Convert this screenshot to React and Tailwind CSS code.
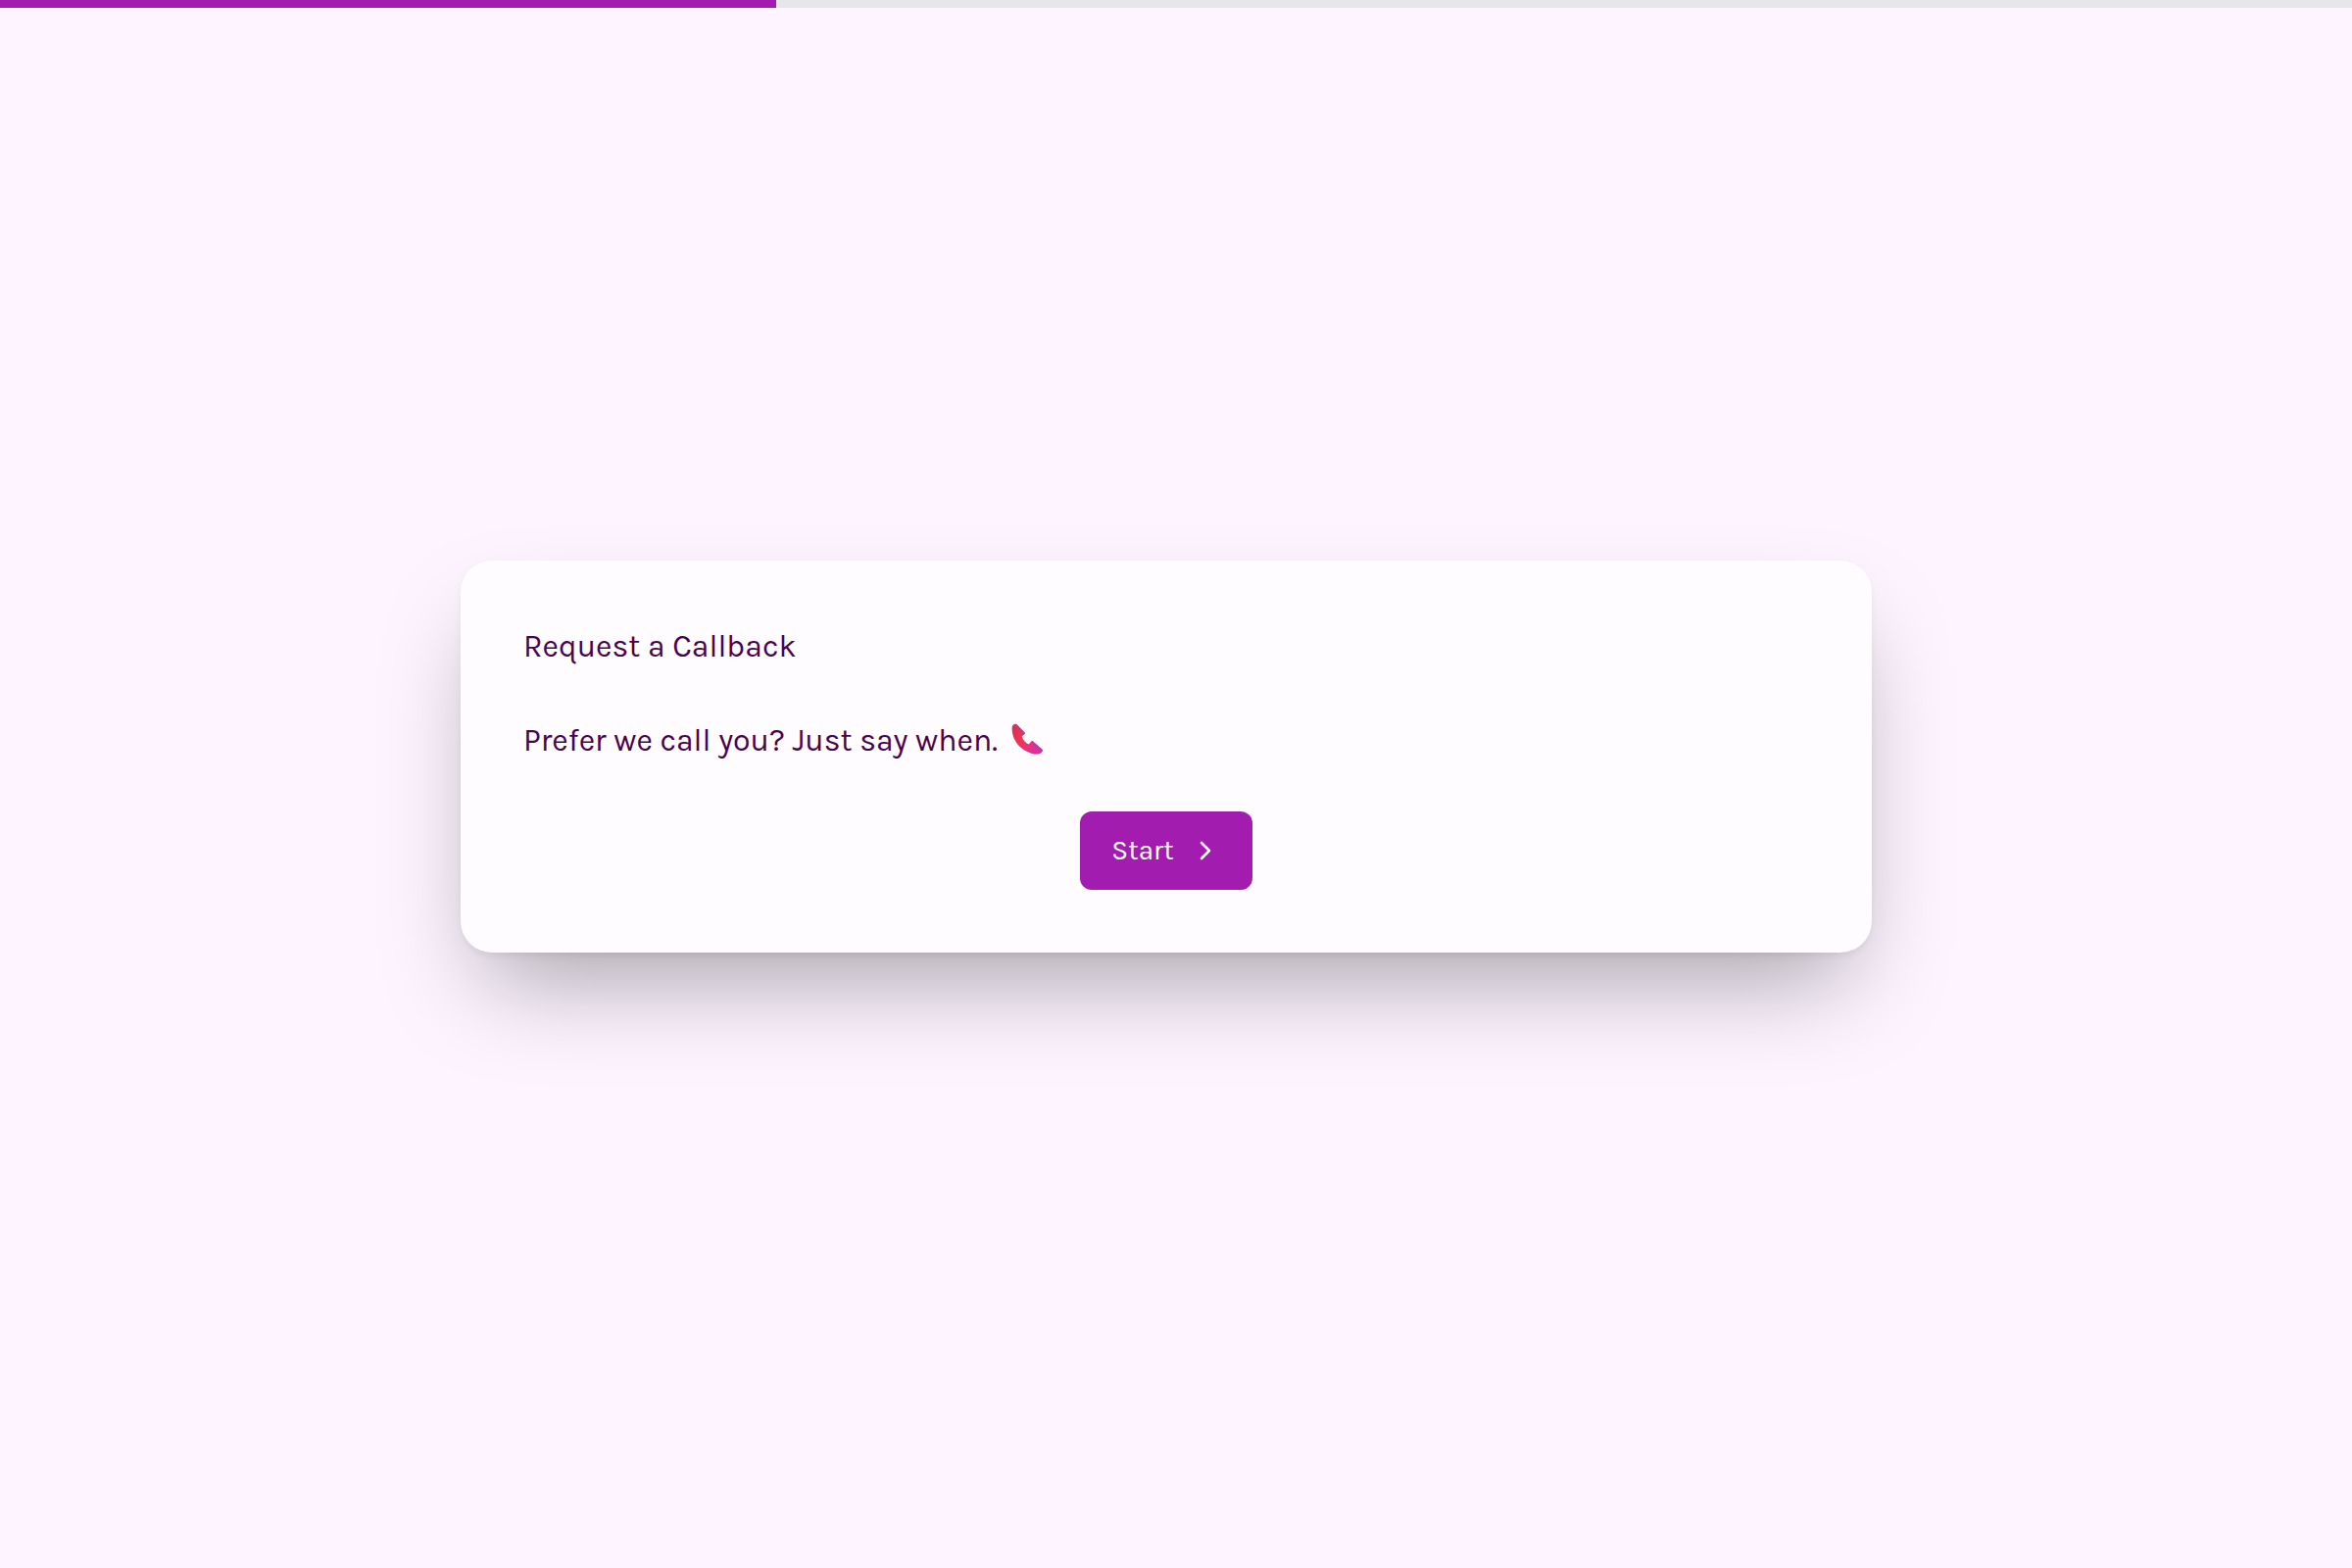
import { ChevronRight } from 'lucide-react';

const PROGRESS = 33;

const ProgressBar = ({ value }) => (
  <div
    role="progressbar"
    aria-label="Progress"
    aria-valuenow={value}
    aria-valuemin={0}
    aria-valuemax={100}
    className="h-2 w-full bg-gray-200"
  >
    <div className="h-full bg-[#a21caf]" style={{ width: `${value}%` }} />
  </div>
);

const PhoneIcon = () => (
  <svg
    className="h-9 w-8 shrink-0"
    viewBox="0 0 32 32"
    preserveAspectRatio="xMidYMin meet"
    fill="none"
    aria-hidden="true"
  >
    <defs>
      <linearGradient id="handset" x1="4" y1="6" x2="29" y2="29" gradientUnits="userSpaceOnUse">
        <stop stopColor="#dc3058" />
        <stop offset="0.35" stopColor="#f0354f" />
        <stop offset="0.65" stopColor="#ea3180" />
        <stop offset="1" stopColor="#d92fa6" />
      </linearGradient>
    </defs>
    {/* handset body */}
    <path
      d="M.7 4.5C.9 1.6 3.2 0 5.2.9l8.2 8.4c.6.6.5 1.4-.1 1.9l-2.6 2c.8 3.3 3.4 6.6 6.8 8.3l2.8-2.7c.6-.6 1.4-.6 2 0l9 7.8c1 1.200.2 3-1.400 3.800-2.600 1.600-7.500 1.400-11.400-.4C8 26.200.2 16.500.7 4.500z"
      fill="url(#handset)"
    />
    {/* ear and mouth pieces */}
    <path d="M3.2 1.400C4 .6 5 .7 5.800 1.500l7.600 7.800c.6.6.5 1.400-.1 1.900l-1.300 1C10.500 8.300 7 4.300 3.200 1.400z" fill="#b0489a" />
    <path d="M20.300 18.800c.6-.6 1.400-.6 2 0l9 7.800c.7.8.5 1.900-.2 2.700-3.600-1.300-8.200-5-10.800-10.500z" fill="#b53fa0" />
  </svg>
);

export default function App() {
  return (
    <div className="flex min-h-screen flex-col bg-[#fdf4ff] font-['Karla','Roboto',sans-serif] text-[#4a044e]">
      <ProgressBar value={PROGRESS} />
      <main className="flex flex-1 items-center justify-center pr-5 pb-16">
        <section className="flex w-full max-w-[1440px] flex-col gap-12 rounded-[32px] bg-[#fefcff] p-16 shadow-[0_50px_100px_-24px_rgba(0,0,0,0.34),0_4px_8px_-2px_rgba(0,0,0,0.08)]">
          <h1 className="text-[32px] leading-[48px]">Request a Callback</h1>
          <p className="flex items-center gap-3.5 text-[32px] leading-[48px]">
            Prefer we call you? Just say when.
            <PhoneIcon />
          </p>
          <button
            type="button"
            className="flex h-20 items-center gap-4 self-center rounded-xl bg-[#a21caf] px-8 text-[28px] text-white"
          >
            Start
            <ChevronRight className="h-8 w-8" />
          </button>
        </section>
      </main>
    </div>
  );
}
